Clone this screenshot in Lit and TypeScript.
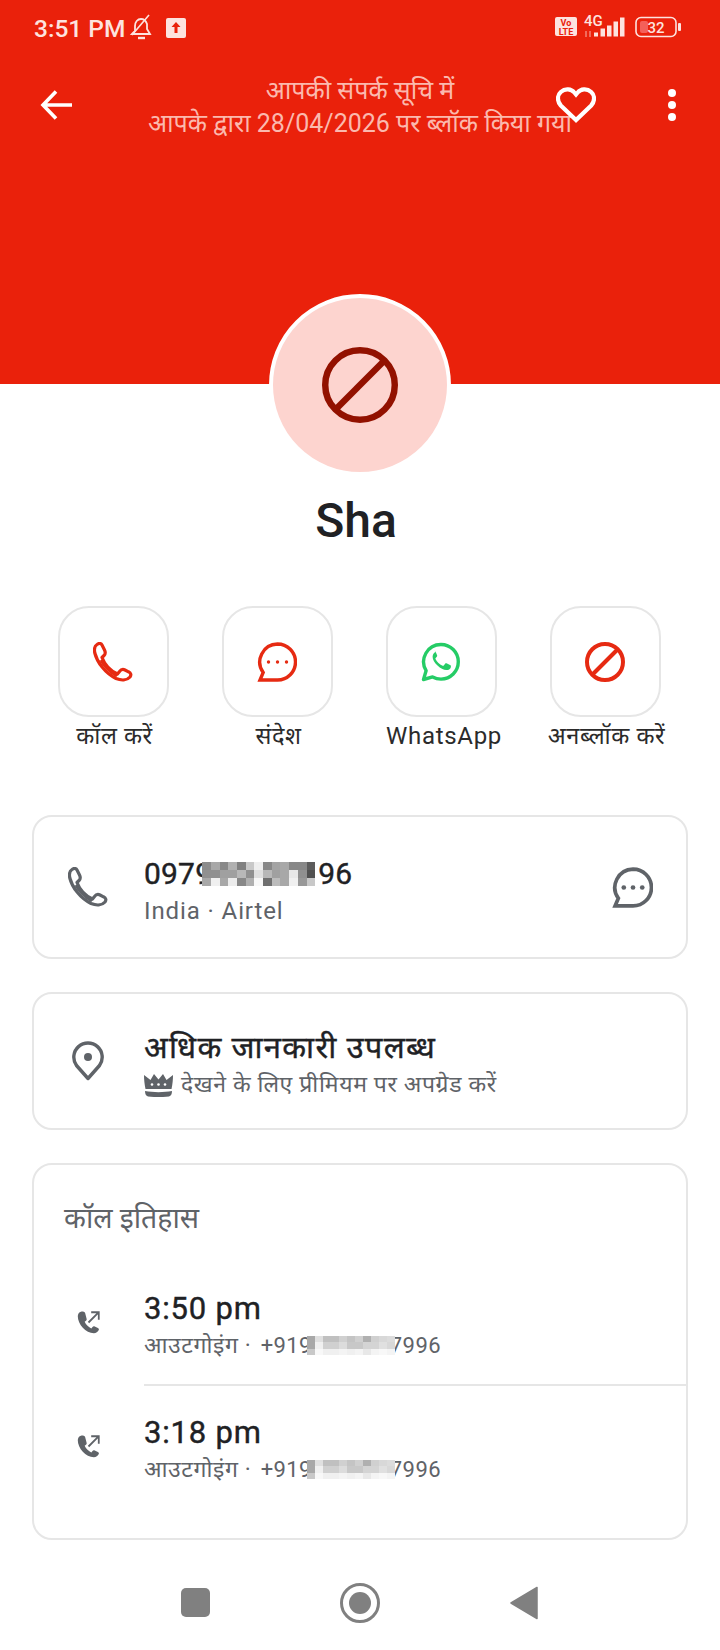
import { LitElement, html, css } from "lit";
import { customElement } from "lit/decorators.js";

const PHONE =
  "M4 2.500C1.500 4 1 7 1.800 11 4 20 12 31 23 36.500c5 2 11 2 14-1.500 1.500-2 1-4-1.500-5.200L32 28c-2-1-4-.5-5.500 1.500l-2 2.500C17 28.500 11.500 22 9 15.500l2-2c1.500-1.500 1.500-3.500.5-5.500L9 3C8 1 6 1 4 2.500z";

const MOSAIC_A = [
  ["#8c8c8c", "#a8a8a8", "#888888", "#b0b0b0", "#808080", "#c8c8c8", "#eeeeee", "#888888", "#a4a4a4", "#a8a8a8", "#888888", "#888888", "#5c5c5c"],
  ["#909090", "#909090", "#a0a0a0", "#a0a0a0", "#b8b8b8", "#909090", "#e0e0e0", "#b8b8b8", "#a0a0a0", "#a8a8a8", "#e8e8e8", "#909090", "#505050"],
  ["#a8a8a8", "#f0f0f0", "#a8a8a8", "#ececec", "#888888", "#b0b0b0", "#f8f8f8", "#707070", "#bcbcbc", "#a8a8a8", "#f0f0f0", "#989898", "#c8c8c8"],
];
const MOSAIC_B = [
  ["#a8a8a8", "#e0e0e0", "#c0c0c0", "#c0c0c0", "#d0d0d0", "#c4c4c4", "#d0d0d0", "#b0b0b0", "#d0d0d0", "#d8d8d8", "#dcdcdc"],
  ["#a8a8a8", "#f0f0f0", "#d0d0d0", "#d0d0d0", "#dcdcdc", "#c8c8c8", "#c8c8c8", "#d4d4d4", "#d4d4d4", "#e0e0e0", "#d8d8d8"],
  ["#c8c8c8", "#f8f8f8", "#f0f0f0", "#f0f0f0", "#f4f4f4", "#f0f0f0", "#f4f4f4", "#e8e8e8", "#f4f4f4", "#f8f8f8", "#f4f4f4"],
];

const ACTIONS = [
  { label: "कॉल करें", icon: "phone", latin: false },
  { label: "संदेश", icon: "chat", latin: false },
  { label: "WhatsApp", icon: "wa", latin: true },
  { label: "अनब्लॉक करें", icon: "block", latin: false },
];

const CALLS = ["3:50 pm", "3:18 pm"];

@customElement("app-root")
export class AppRoot extends LitElement {
  static styles = css`
    :host {
      display: block;
      width: 720px;
      height: 1650px;
      background: #fff;
      overflow: hidden;
      font-family: Roboto, "Noto Sans", sans-serif;
      color: #202124;
    }

    .hero {
      background: #ea210b;
      height: 384px;
      display: flex;
      flex-direction: column;
      position: relative;
    }

    .status {
      height: 56px;
      flex: none;
      padding: 0 0 0 34px;
      display: flex;
      align-items: center;
      color: #fde3df;
      font-size: 24.500px;
      font-weight: 500;
    }

    .status .time {
      margin-right: 4px;
    }

    .status .up {
      margin-left: 13px;
    }

    .status .right {
      margin-left: auto;
      margin-right: 38px;
      margin-top: -3px;
      display: flex;
      align-items: center;
    }

    .status svg {
      overflow: visible;
    }

    .status .net {
      margin-left: 7px;
    }

    .status .batt {
      margin-left: 9px;
    }

    .toolbar {
      height: 98px;
      display: flex;
      align-items: center;
      position: relative;
      padding: 0 42px 0 40px;
      justify-content: space-between;
    }

    .notice {
      position: absolute;
      left: 0;
      right: 0;
      top: 18px;
      text-align: center;
      color: #fbb9ae;
      font-size: 25px;
      line-height: 33px;
      white-space: nowrap;
    }

    .back-btn {
      position: relative;
    }

    .tool-right {
      display: flex;
      align-items: center;
      gap: 70px;
      position: relative;
    }

    .avatar {
      position: absolute;
      left: 269px;
      top: 294px;
      width: 182px;
      height: 182px;
      box-sizing: border-box;
      border: 4.500px solid #fff;
      border-radius: 50%;
      background: #fdd4cf;
      display: flex;
      align-items: center;
      justify-content: center;
    }

    .name {
      margin-top: 109px;
      padding-right: 8px;
      text-align: center;
      font-size: 48px;
      line-height: 56px;
      font-weight: 500;
    }

    .actions {
      margin-top: 57px;
      padding: 0 35px;
      display: grid;
      grid-template-columns: repeat(4, 156px);
      column-gap: 8px;
    }

    .action {
      display: flex;
      flex-direction: column;
      align-items: center;
    }

    .action .box {
      box-sizing: border-box;
      width: 111px;
      height: 111px;
      border: 2px solid #e6e6e6;
      border-radius: 31px;
      display: flex;
      align-items: center;
      justify-content: center;
    }

    .action .label {
      margin-top: 2px;
      padding-left: 3px;
      font-size: 23.500px;
      line-height: 34px;
      white-space: nowrap;
      color: #2b2b2b;
      letter-spacing: 0.6px;
    }

    .action .label.latin {
      padding-left: 6px;
      font-size: 24px;
      letter-spacing: 0.7px;
    }

    .card {
      box-sizing: border-box;
      margin: 0 32px;
      border: 2px solid #e6e6e6;
      border-radius: 20px;
    }

    .row {
      display: flex;
      align-items: center;
      padding-left: 33px;
    }

    .row .icon {
      width: 42px;
      display: flex;
      justify-content: center;
      margin-right: 35px;
    }

    .row .text {
      margin-top: 7px;
    }

    .title {
      font-size: 31px;
      line-height: 40px;
      font-weight: 400;
      -webkit-text-stroke: 0.4px #202124;
      color: #202124;
      letter-spacing: 0.8px;
    }

    .title.wide {
      letter-spacing: 1.300px;
    }

    .sub {
      font-size: 23px;
      line-height: 34px;
      color: #5f6368;
      letter-spacing: 0.6px;
      display: flex;
      align-items: center;
      white-space: pre;
    }

    .sub.latin {
      font-size: 24px;
      letter-spacing: 0.9px;
    }

    .sub .digits {
      font-size: 22px;
      letter-spacing: 0.4px;
    }

    .sub .plus {
      margin-left: 3px;
    }

    .sub .tail {
      margin-left: -5px;
    }

    .sub .crown {
      margin-right: 8px;
    }

    .number {
      display: flex;
      align-items: center;
      font-size: 30px;
      letter-spacing: 0.2px;
    }

    .number .tail {
      margin-left: 3px;
    }

    .mosaic {
      display: grid;
      flex: none;
      position: relative;
    }

    .number .mosaic {
      margin-left: -10px;
    }

    .sub .mosaic {
      margin-left: -5px;
    }

    .card.phone {
      margin-top: 62px;
      height: 144px;
    }

    .card.phone .row,
    .card.info .row {
      height: 100%;
    }

    .card.phone .msg {
      margin-left: auto;
      margin-right: 33px;
      display: flex;
    }

    .card.info {
      margin-top: 33px;
      height: 138px;
    }

    .card.history {
      margin-top: 33px;
      height: 377px;
      padding-top: 36px;
    }

    .history h3 {
      margin: 0;
      padding-left: 30px;
      font-size: 28.500px;
      line-height: 36px;
      font-weight: 400;
      color: #5f6368;
    }

    .calls {
      margin-top: 23px;
    }

    .call {
      height: 124px;
      box-sizing: border-box;
      position: relative;
    }

    .call + .call::before {
      content: "";
      position: absolute;
      left: 110px;
      right: 0;
      top: 0;
      height: 2px;
      background: #e6e6e6;
    }

    .nav {
      margin-top: 8px;
      height: 109px;
      display: flex;
      align-items: center;
      padding-left: 181px;
    }

    .nav .square {
      width: 29px;
      height: 29px;
      border-radius: 5px;
      background: #808080;
    }

    .nav .home {
      margin-left: 130px;
    }

    .nav .back {
      margin-left: 130px;
    }
  `;

  private mosaic(rows: string[][], cw: number, ch: number) {
    return html`<div
      class="mosaic"
      style="grid-template-columns: repeat(${rows[0].length}, ${cw}px); grid-auto-rows: ${ch}px"
    >
      ${rows.flat().map((c) => html`<i style="background: ${c}"></i>`)}
    </div>`;
  }

  private phoneIcon(color: string) {
    return html`<svg width="40" height="40" viewBox="0 0 40 40" fill="none">
      <path d=${PHONE} stroke=${color} stroke-width="3.200" stroke-linejoin="round"></path>
      <path d="M8 18C11 24 16 29 24 34" stroke=${color} stroke-width="3"></path>
    </svg>`;
  }

  private chatIcon(color: string, size: number, stroke: number, dot: number) {
    return html`<svg width=${size} height=${size} viewBox="0 0 40 40" fill="none">
      <path
        d="M20.500 2a18 18 0 1 1 0 36H3l3.200-7.500A18 18 0 0 1 20.500 2z"
        stroke=${color}
        stroke-width=${stroke}
      ></path>
      <circle cx="11.500" cy="20" r=${dot} fill=${color}></circle>
      <circle cx="20.500" cy="20" r=${dot} fill=${color}></circle>
      <circle cx="29.500" cy="20" r=${dot} fill=${color}></circle>
    </svg>`;
  }

  private blockIcon(color: string, size: number, width: number) {
    return html`<svg width=${size} height=${size} viewBox="0 0 40 40" fill="none">
      <circle cx="20" cy="20" r=${20 - width / 2} stroke=${color} stroke-width=${width}></circle>
      <path d="M7 33L33 7" stroke=${color} stroke-width=${width}></path>
    </svg>`;
  }

  private whatsappIcon() {
    return html`<svg width="40" height="40" viewBox="0 0 40 40" fill="none">
      <path
        d="M20 2.500a17.300 17.300 0 0 1 0 34.600c-3 0-5.900-.8-8.400-2.200L2.500 37.500l2.600-8.800A17.300 17.300 0 0 1 20 2.500z"
        stroke="#25cc66"
        stroke-width="3.400"
        stroke-linejoin="round"
      ></path>
      <path
        d="M14.600 10c-1.200.2-3 2-3 4.800 0 3 2 6 4.900 8.800 3 2.800 6 4.500 8.800 4.500 2.600 0 4.400-1.700 4.600-3.200.1-.8 0-1.400-.4-1.600l-4-2c-.5-.2-.9-.1-1.200.3l-1.500 1.900c-.3.4-.7.4-1.200.2-1.700-.8-3.100-1.700-4.400-3-1.100-1.100-2-2.300-2.700-3.700-.2-.5-.1-.8.200-1.100l1.300-1.500c.3-.4.300-.8.100-1.200l-1.700-3.900c-.3-.6-.6-.8-.8-.8z"
        fill="#25cc66"
      ></path>
    </svg>`;
  }

  private actionIcon(name: string) {
    if (name === "phone") return this.phoneIcon("#e62a12");
    if (name === "chat") return this.chatIcon("#e62a12", 40, 3.400, 1.700);
    if (name === "wa") return this.whatsappIcon();
    return this.blockIcon("#e62a12", 40, 4);
  }

  private statusBar() {
    return html`<div class="status">
      <span class="time">3:51 PM</span>
      <svg width="24" height="28" viewBox="0 0 24 28" fill="none" stroke="#fde3df" stroke-width="1.800">
        <path d="M3 20l3-3v-5c0-4 2.500-7 6-7s5 2 6 5v5l3 5H3z"></path>
        <path d="M3 21L20 1" stroke-width="1.600"></path>
        <path d="M9 24h7" stroke-width="2.400"></path>
      </svg>
      <svg class="up" width="20" height="20" viewBox="0 0 20 20">
        <rect width="20" height="20" rx="2" fill="#fde3df"></rect>
        <path d="M10 4l4.500 5H11.500v6h-3V9H5.500z" fill="#ea210b"></path>
      </svg>
      <div class="right">
        <svg width="22" height="25" viewBox="0 0 22 25">
          <rect y="3" width="22" height="19" rx="2" fill="#fde3df"></rect>
          <text x="11" y="12" font-size="9" font-weight="700" text-anchor="middle" fill="#ea210b" font-family="Roboto">Vo</text>
          <text x="11" y="20.500" font-size="9" font-weight="700" text-anchor="middle" fill="#ea210b" font-family="Roboto">LTE</text>
        </svg>
        <svg class="net" width="42" height="26" viewBox="0 0 42 26">
          <text x="0" y="12" font-size="15" fill="#fde3df" font-family="Roboto">4G</text>
          <path d="M2 17v6M6 23v-6" stroke="#fde3df" stroke-width="1.500" opacity="0.5"></path>
          <rect x="10" y="18.500" width="4" height="4" fill="#fde3df"></rect>
          <rect x="16.500" y="14.500" width="4.500" height="8" fill="#fde3df"></rect>
          <rect x="23" y="11.500" width="4.500" height="11" fill="#fde3df"></rect>
          <rect x="29.500" y="7.500" width="4.500" height="15" fill="#fde3df"></rect>
          <rect x="36" y="3.500" width="4.500" height="19" fill="#fde3df"></rect>
        </svg>
        <svg class="batt" width="47" height="22" viewBox="0 0 47 22">
          <rect x="1" y="1.500" width="40" height="19" rx="5" fill="none" stroke="#fde3df" stroke-width="1.600"></rect>
          <rect x="5" y="5" width="8" height="12" rx="2" fill="#f4605a"></rect>
          <text x="21" y="16.500" font-size="15" font-weight="500" text-anchor="middle" fill="#fde3df" font-family="Roboto">32</text>
          <rect x="43" y="7" width="3" height="8" rx="1" fill="#fde3df"></rect>
        </svg>
      </div>
    </div>`;
  }

  render() {
    return html`
      <div class="hero">
        ${this.statusBar()}
        <div class="toolbar">
          <div class="notice">आपकी संपर्क सूचि में<br />आपके द्वारा 28/04/2026 पर ब्लॉक किया गया</div>
          <svg class="back-btn" width="32" height="30" viewBox="0 0 32 30" fill="none" stroke="#fff" stroke-width="3.600">
            <path d="M32 15H3M16 1.500L3 15l13 13.500"></path>
          </svg>
          <div class="tool-right">
            <svg width="40" height="36" viewBox="0 0 40 36" fill="none" stroke="#fff" stroke-width="4.200">
              <path d="M20 33L4.800 18.500C.8 14 1.300 8 4.800 5 9.300 1 15.300 2 18.300 5.500L20 7.500l1.700-2c3-3.500 9-4.500 13.500-.5 3.500 3 4 9 0 13.500z"></path>
            </svg>
            <svg width="12" height="36" viewBox="0 0 12 36" fill="#fff">
              <circle cx="6" cy="6" r="4"></circle>
              <circle cx="6" cy="18" r="4"></circle>
              <circle cx="6" cy="30" r="4"></circle>
            </svg>
          </div>
        </div>
        <div class="avatar">${this.blockIcon("#921100", 76, 3.400)}</div>
      </div>

      <div class="name">Sha</div>

      <div class="actions">
        ${ACTIONS.map(
          (a) => html`<div class="action">
            <div class="box">${this.actionIcon(a.icon)}</div>
            <div class="label ${a.latin ? "latin" : ""}">${a.label}</div>
          </div>`
        )}
      </div>

      <div class="card phone">
        <div class="row">
          <div class="icon">${this.phoneIcon("#5f6368")}</div>
          <div class="text">
            <div class="title number"><span>0979</span>${this.mosaic(MOSAIC_A, 8.700, 8)}<span class="tail">96</span></div>
            <div class="sub latin">India · Airtel</div>
          </div>
          <div class="msg">${this.chatIcon("#5f6368", 41, 3.600, 2.300)}</div>
        </div>
      </div>

      <div class="card info">
        <div class="row">
          <div class="icon">
            <svg width="32" height="40" viewBox="0 0 32 40" fill="none">
              <path d="M16 37.500L4.500 24.500a14.200 14.200 0 1 1 23 0z" stroke="#5f6368" stroke-width="3.400" stroke-linejoin="round"></path>
              <circle cx="16" cy="16" r="4" fill="#5f6368"></circle>
            </svg>
          </div>
          <div class="text">
            <div class="title wide">अधिक जानकारी उपलब्ध</div>
            <div class="sub">
              <svg class="crown" width="29" height="24" viewBox="0 0 29 24" fill="#5f6368">
                <path d="M0 2l6.500 5L10 1l4.500 5.500L19 1l3.500 6L29 2c0 5-.5 9-1.500 14h-26C.5 11 0 7 0 2z"></path>
                <circle cx="8" cy="11.500" r="1.300" fill="#fff"></circle>
                <circle cx="14.500" cy="11.500" r="1.300" fill="#fff"></circle>
                <circle cx="21" cy="11.500" r="1.300" fill="#fff"></circle>
                <path d="M1 18c8 1.500 19 1.500 27 0 0 3-1 5-3 5.500-6 .8-15 .8-21 0-2-.5-3-2.500-3-5.500z"></path>
              </svg>
              <span>देखने के लिए प्रीमियम पर अपग्रेड करें</span>
            </div>
          </div>
        </div>
      </div>

      <div class="card history">
        <h3>कॉल इतिहास</h3>
        <div class="calls">
          ${CALLS.map(
            (time) => html`<div class="row call">
              <div class="icon">
                <svg width="25" height="25" viewBox="0 0 28 28" fill="none">
                  <path d="M5.500 2c-2 .5-3.500 2.500-3.500 5 0 9 9 19 18 19 2.500 0 4.500-1.500 5.500-3.500.4-1 0-1.800-1-2.300l-3.500-1.700c-1-.5-1.800-.3-2.500.6l-1.300 1.600c-3-1.200-6-4.200-7.500-7.500l1.500-1.300c.8-.7 1-1.500.6-2.500L10.300 3.500C9.600 2 7.500 1.500 5.500 2z" fill="#5f6368"></path>
                  <path d="M14 14L25 3M17 2.500h8.500V11" stroke="#5f6368" stroke-width="2"></path>
                </svg>
              </div>
              <div class="text">
                <div class="title">${time}</div>
                <div class="sub">
                  <span>आउटगोइंग · </span><span class="digits plus">+919</span>${this.mosaic(MOSAIC_B, 8, 6.500)}<span class="digits tail">7996</span>
                </div>
              </div>
            </div>`
          )}
        </div>
      </div>

      <div class="nav">
        <div class="square"></div>
        <svg class="home" width="40" height="40" viewBox="0 0 40 40">
          <circle cx="20" cy="20" r="18.500" fill="none" stroke="#808080" stroke-width="3"></circle>
          <circle cx="20" cy="20" r="11" fill="#808080"></circle>
        </svg>
        <svg class="back" width="28" height="34" viewBox="0 0 28 34">
          <path d="M27 1.500v31L1 17z" fill="#808080" stroke="#808080" stroke-width="1.500" stroke-linejoin="round"></path>
        </svg>
      </div>
    `;
  }
}
